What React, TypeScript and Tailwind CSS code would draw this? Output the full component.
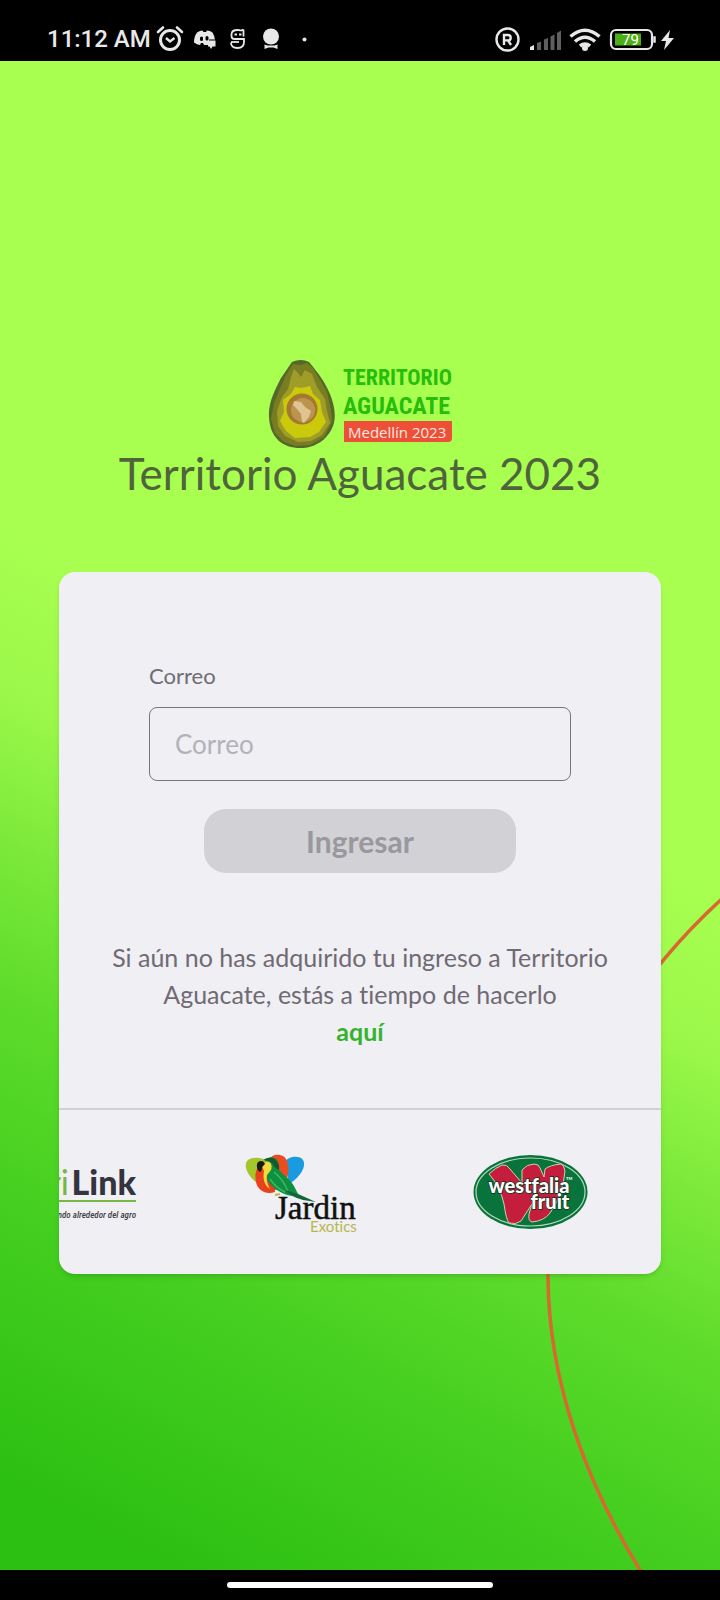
import React, { useState } from "react"

function StatusBar() {
    return (
        <header className="flex h-[61px] items-end justify-between bg-black pb-2 pl-[47px] pr-[45px] text-[#e8e8e8]">
            <div className="flex items-center gap-1">
                <span className="font-['Roboto',sans-serif] text-[24px] font-medium leading-[24px]">11:12 AM</span>
                <svg width="158" height="28" viewBox="0 0 158 28" fill="none" stroke="currentColor" aria-hidden="true">
                    {/* alarm */}
                    <circle cx="15" cy="15" r="9.500" strokeWidth="3" />
                    <path d="M3 7l5-4.500M27 7l-5-4.500" strokeWidth="2.600" strokeLinecap="round" />
                    <path d="M11 13l4 3.500 4.500-3.500" strokeWidth="2.400" />
                    {/* discord */}
                    <path
                        d="M42 7.500q3-2 5.500-2l1 1.500h2.500l1-1.500q3 0 5.500 2 2 3.500 2.500 7h-6v5.500h-5l-1-2h-2l-1 2q-3-.5-6-2.500 0-6 3-10z"
                        fill="currentColor"
                        stroke="none"
                    />
                    <path d="M46.500 13v1.500M52 12.500v1.500" stroke="#000" strokeWidth="3" strokeLinecap="round" />
                    <path d="M53 15.500h7.500v6h-3l-1.500 2.500-1.500-2.500h-1.500z" fill="currentColor" stroke="none" />
                    {/* masked face */}
                    <path
                        d="M88.500 4.500l-2.500 1q-1.500-.5-3.500-.5-6 0-6 4.500v1.500q0 3 3 3h9.500v3q0 6-6.500 6t-6.500-5.500M88.500 4.500v7"
                        strokeWidth="1.800"
                    />
                    <path d="M76 17h8" strokeWidth="1.800" />
                    <path d="M79.500 9.500h2.500M84 9.500h2.500" strokeWidth="2.200" />
                    {/* badge */}
                    <circle cx="116" cy="11.500" r="8" fill="currentColor" stroke="none" />
                    <path d="M109.500 19.500l3 1h7l3-1v4.500l-4-1.500h-5l-4 1.500z" fill="currentColor" stroke="none" />
                    <circle cx="149.500" cy="14.500" r="2" fill="currentColor" stroke="none" />
                </svg>
            </div>
            <svg width="181" height="28" viewBox="0 0 181 28" fill="none" stroke="currentColor" aria-hidden="true">
                <circle cx="13.500" cy="14.500" r="11" strokeWidth="2.400" />
                <path d="M10 20V10h4a2.700 2.700 0 0 1 0 5.400h-4M14 15.400l3 4.600" strokeWidth="2.400" />
                <path d="M36 25v-3l4-2v5z" fill="currentColor" stroke="none" />
                <g fill="#5f5f5f" stroke="none">
                    <path d="M43 25v-7l4-1.500v8.500zM50 25V14.500l4-1.500v12zM56.500 25V11.500l4-2v15.500zM63 25V8l4-2.500v19.500z" />
                </g>
                <g strokeWidth="3.600">
                    <path d="M76.500 11.500q14.500-12.500 29 0M81 16.500q10-8.500 20 0M86 21q5-4 10 0" />
                </g>
                <circle cx="91" cy="23" r="3" fill="currentColor" stroke="none" />
                <rect x="117" y="5" width="41" height="19" rx="5" strokeWidth="2.200" />
                <rect x="121" y="8.500" width="26" height="12" fill="#4caf15" stroke="none" />
                <path d="M160 12h1v5h-1z" fill="currentColor" strokeWidth="1.500" />
                <text x="128" y="20" fontFamily="Roboto, sans-serif" fontSize="15" fill="#fff" stroke="none">
                    79
                </text>
                <path d="M176 5l-9 11h5l-2 9 10-12h-5.500z" fill="currentColor" stroke="none" />
            </svg>
        </header>
    )
}

function EventLogo() {
    return (
        <svg width="184" height="90" viewBox="0 0 184 90" role="img" aria-label="Territorio Aguacate Medellín 2023">
            <path
                d="M24 3q9-4 17 0c10 12 16 20 21 32 4 10 6 20 4 29-4 14-16 24-31 25C16 90 2 80 1 58c-1-14 6-27 12-39z"
                fill="#55672a"
            />
            <path
                d="M25 5l8 1 6-2 6 5 14 24 4 18 1 12-8 15-14 8-14 1-12-4-9-9-4-14 3-16 5-12 7-16z"
                fill="#777d20"
            />
            <path d="M26 10l4 4 3 4 4-7 7 4 5 13 8 12 2 12 3 12-8 12-11 6-13 1-13-6-7-10-1-15 5-14 6-8 3-12z" fill="#a09c28" />
            <path d="M27 28l6 1 9-2 3 8 7 6 2 12 4 10-7 10-9 5-15 1-9-7-6-10 4-9-1-12 8-6z" fill="#cbc90c" />
            <circle cx="34" cy="50" r="15.500" fill="#a3782f" />
            <circle cx="35" cy="51" r="12" fill="#bb9450" />
            <path d="M26 42l7 1 4 5 6 4-2 6-5 6-2-1-1-8-4-5-4-4z" fill="#dfc491" />
            <g fontFamily="'Liberation Sans Narrow', 'Roboto Condensed', Roboto, sans-serif" fontWeight="700" fill="#26bd0b">
                <text x="75" y="26" fontSize="22">
                    TERRITORIO
                </text>
                <text x="75" y="55" fontSize="24">
                    AGUACATE
                </text>
            </g>
            <path d="M76 62h108v17q0 4-4 4H76z" fill="#ee4f38" />
            <text x="80" y="79" fontFamily="'Open Sans', sans-serif" fontSize="15" fontWeight="500" fill="#ffe9df">
                Medellín 2023
            </text>
        </svg>
    )
}

function AgriLinkLogo() {
    return (
        <svg width="128" height="60" viewBox="0 0 128 60" role="img" aria-label="AgriLink">
            <g fontFamily="Lato, sans-serif" fontSize="34">
                <text x="60" y="33" textAnchor="end" fill="#75b843">
                    Agri
                </text>
                <text x="127" y="33" textAnchor="end" fontWeight="900" fill="#34343f">
                    Link
                </text>
            </g>
            <path d="M0 39h127" stroke="#75b843" strokeWidth="2" />
            <text
                x="127"
                y="56"
                textAnchor="end"
                fontFamily="'Liberation Sans Narrow', 'Roboto Condensed', Roboto, sans-serif"
                fontSize="9"
                fontStyle="italic"
                fontWeight="500"
                fill="#3f3f46"
            >
                El mundo alrededor del agro
            </text>
        </svg>
    )
}

function JardinLogo() {
    return (
        <svg width="114" height="86" viewBox="0 -6 114 86" role="img" aria-label="Jardin Exotics">
            <path d="M12 28C4 22-2 12 2 6c5-5 16-4 20 1l-4 22z" fill="#a4c52b" />
            <path d="M44 29L40 7c3-6 15-7 18-2 4 7-4 18-14 24z" fill="#1a9be0" />
            <path d="M24 5c3-7 15-7 18 1 3 9 1 18-4 26l-10 4z" fill="#ea4c22" />
            <path d="M13 13c6-3 14 3 15 10l2 14c-9 3-17-1-19-10-1-6-1-11 2-14z" fill="#e5421d" />
            {/* parrot */}
            <path d="M20 6c2-5 11-5 13 1 1 4 0 6 2 9 6 6 13 11 16 19l3 6c-8 1-16-2-22-6-8-5-11-11-11-19z" fill="#0d9140" />
            <path d="M18 5q6-4 12-1 5 4 4 11-5-2-7-7-4-3-9-3z" fill="#17592d" />
            <path d="M20 7c5-2 8 3 6 8l-4 5c-1 6 1 10 3 14-7-5-7-12-6-18-2-3-1-7 1-9z" fill="#f2dc3c" />
            <path d="M12 9c1-4 7-4 8 0l-3 3q0 4-2 5-4-3-3-8z" fill="#17191b" />
            <path d="M29 17q10 8 14 20M25 24q6 9 15 13" stroke="#3fb864" strokeWidth="1.500" fill="none" />
            <path d="M40 35l13 4 18 8-13-2q-12-3-18-10z" fill="#14663a" />
            <path d="M30 40l5-1" stroke="#b6b84e" strokeWidth="2" />
            <text x="30" y="64" fontFamily="'Liberation Serif', serif" fontSize="33" fill="#111" stroke="#111" strokeWidth=".5">
                Jardin
            </text>
            <text x="65" y="77" fontFamily="Lato, sans-serif" fontSize="15" fill="#b6b84e">
                Exotics
            </text>
        </svg>
    )
}

function WestfaliaLogo() {
    return (
        <svg width="116" height="76" viewBox="0 0 116 76" role="img" aria-label="Westfalia Fruit">
            <ellipse cx="57.500" cy="38" rx="57" ry="37" fill="#08743b" />
            <ellipse cx="57.500" cy="38" rx="54.500" ry="34" fill="none" stroke="#b5d7bb" strokeWidth="1.200" />
            {/* big W */}
            <path
                d="M16 20q6-6 13-9 5-1 8 4l12 14 0-13q5-6 12-6 5 0 6 4l4 9 1-8q5-4 16-5 3 1 4 7-2 24-15 42-6 8-18 9-4-1-3-8l3-10-11 17q-5 4-12 2-3-4-5-19-4-18-15-30z"
                fill="#c51e3d"
                stroke="#c9d3b0"
                strokeWidth="1"
            />
            <g fontFamily="Lato, sans-serif" fontWeight="900" fill="#fff">
                <text x="56" y="39" textAnchor="middle" fontSize="20" stroke="#07351d" strokeWidth="1.500" paintOrder="stroke">
                    westfalia
                </text>
                <text x="77" y="55" textAnchor="middle" fontSize="20" stroke="#07351d" strokeWidth="1.500" paintOrder="stroke">
                    fruit
                </text>
                <text x="93" y="26" fontSize="4">
                    TM
                </text>
            </g>
        </svg>
    )
}

export default function App() {
    const [email, setEmail] = useState("")

    return (
        <div className="flex min-h-screen flex-col bg-black font-['Lato',sans-serif] [font-variant-ligatures:none]">
            <StatusBar />

            <main className="relative flex-1 overflow-hidden bg-[linear-gradient(207deg,#a8ff50_44%,#9bf84a_53%,#7ce93a_61%,#5fdc2b_69%,#45cf20_80%,#3ac81a_87%,#2cc012_95%)] px-[59px] pb-[296px] pt-[298px]">
                <svg
                    className="absolute bottom-0 right-0"
                    width="180"
                    height="680"
                    viewBox="540 890 180 680"
                    fill="none"
                    aria-hidden="true"
                >
                    <path
                        d="M724 897C610 1000 548 1130 548 1275C548 1385 590 1490 642 1573"
                        stroke="#d7682f"
                        strokeWidth="3.500"
                    />
                </svg>

                <div className="relative flex flex-col items-center">
                    <EventLogo />
                    <h1 className="text-[44px] leading-[48px] text-[#50643c]">Territorio Aguacate 2023</h1>
                </div>

                <section className="relative mt-[75px] overflow-hidden rounded-2xl bg-[#efeff4] shadow-md">
                    <form className="px-[90px] pt-[89px]" onSubmit={(e) => e.preventDefault()}>
                        <label htmlFor="correo" className="block text-[22px] leading-[30px] text-[#706c73]">
                            Correo
                        </label>
                        <input
                            id="correo"
                            type="email"
                            value={email}
                            onChange={(e) => setEmail(e.currentTarget.value)}
                            placeholder="Correo"
                            className="mt-4 block h-[74px] w-full rounded-lg border border-[#77757b] bg-transparent px-[25px] text-[26px] text-[#706c73] outline-none placeholder:text-[#b3b2b8]"
                        />
                        <button
                            type="submit"
                            disabled={!email}
                            className="mx-auto mt-7 block h-[64px] w-[312px] max-w-full rounded-[22px] bg-[#d2d1d6] text-[30px] font-bold text-[#99989d]"
                        >
                            Ingresar
                        </button>
                    </form>

                    <p className="px-8 pb-[58px] pt-[66px] text-center text-[25px] leading-[37px] text-[#706a73]">
                        Si aún no has adquirido tu ingreso a Territorio Aguacate, estás a tiempo de hacerlo
                        <br />
                        <a href="#registro" className="font-bold text-[#36b32c]">
                            aquí
                        </a>
                    </p>

                    <div className="border-t-2 border-[#d0d0d5]">
                        <div className="-ml-[101px] flex h-[164px] items-center">
                            <div className="flex w-[229px] shrink-0 justify-center">
                                <AgriLinkLogo />
                            </div>
                            <div className="flex w-[229px] shrink-0 justify-center">
                                <JardinLogo />
                            </div>
                            <div className="flex w-[229px] shrink-0 justify-center">
                                <WestfaliaLogo />
                            </div>
                        </div>
                    </div>
                </section>
            </main>

            <footer className="flex h-[30px] items-center justify-center">
                <div className="h-[6px] w-[266px] rounded-full bg-white" />
            </footer>
        </div>
    )
}
